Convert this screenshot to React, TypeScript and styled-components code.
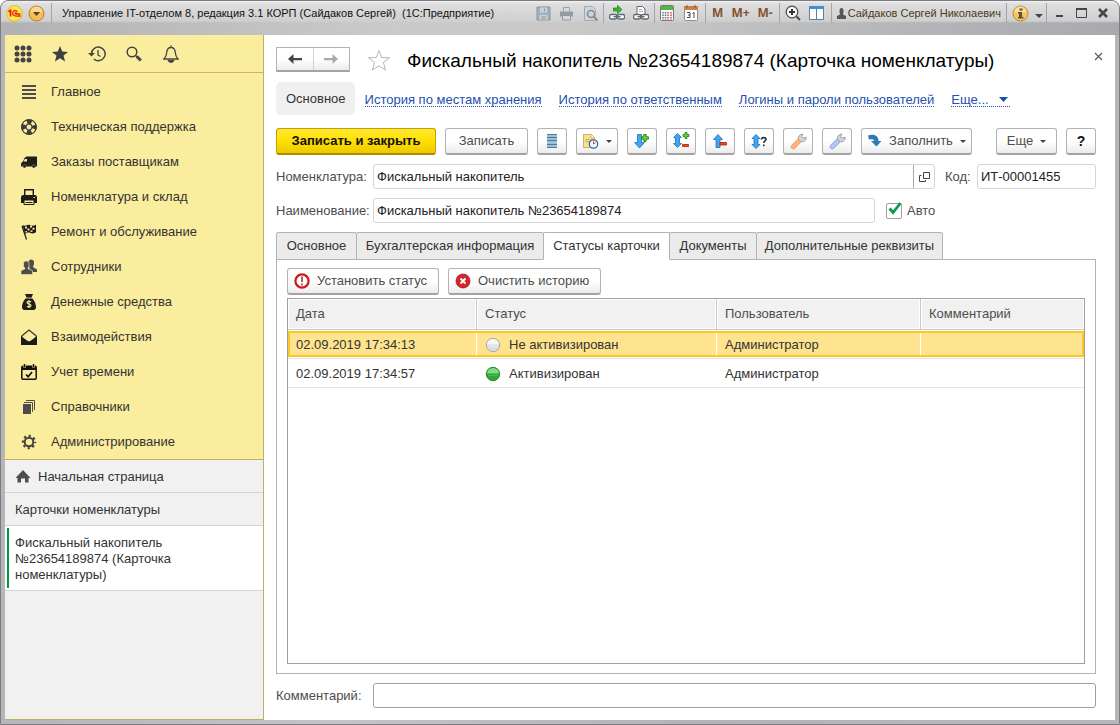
import React from 'react';
import styled, { createGlobalStyle, css } from 'styled-components';

const GlobalStyle = createGlobalStyle`
  *, *::before, *::after { box-sizing: border-box; }
  body { margin: 0; background: #fff; color: #333; font: 13px/16px "Liberation Sans", Arial, sans-serif; }
  button, input { font: inherit; color: inherit; margin: 0; }
  svg { display: block; flex: none; }
`;

/* ---------- window frame ---------- */
const Window = styled.div`
  display: flex;
  flex-direction: column;
  min-height: 100vh;
  padding: 0 4px 4px;
  border: 1px solid #7d7d7f;
  border-radius: 8px 8px 0 0;
  background: linear-gradient(90deg, #b6b6b8, #c4c4c6 30%, #b4b5b8 60%, #b6b6b8);
`;
const TitleBar = styled.header`
  display: flex;
  align-items: center;
  height: 34px;
  margin: 0 -4px;
  padding: 0 5px 10px 5px;
  border-radius: 7px 7px 0 0;
  color: #1c1c1c;
  font: 11px/16px "Liberation Sans", Arial, sans-serif;
  background: linear-gradient(#f0f0f0 0, #dedede 3px, #cfcfd0 20px, rgba(200, 200, 202, 0) 22px),
    linear-gradient(90deg, #b2b2b4, #cacacb 35%, #c8c8c9 55%, #b2b3b6 85%, #a9aaae);
`;
const BarButton = styled.button<{ $w: number }>`
  display: flex;
  flex: none;
  align-items: center;
  justify-content: center;
  width: ${p => p.$w}px;
  height: 22px;
  padding: 0;
  border: 0;
  background: none;
`;
const MemoryButton = styled(BarButton)`
  color: #85522c;
  font: bold 12px/16px "Noto Sans", Tahoma, sans-serif;
`;
const BarLine = styled.span<{ $m?: number }>`
  flex: none;
  width: 1px;
  height: 20px;
  margin: 0 ${p => p.$m ?? 1}px;
  background: #a5a5a7;
`;
const AppTitle = styled.h1`
  flex: 1;
  margin: 0 0 0 9px;
  font: inherit;
  color: #111;
  white-space: nowrap;
`;
const UserName = styled.button`
  display: flex;
  align-items: center;
  gap: 2px;
  padding: 0 4px 0 3px;
  border: 0;
  background: none;
  color: #4a3a1c;
  white-space: nowrap;
`;
const Body = styled.div`
  display: flex;
  flex: 1;
  background: #fff;
`;

/* ---------- sidebar ---------- */
const Sidebar = styled.aside`
  display: flex;
  flex-direction: column;
  flex: none;
  width: 259px;
  border-right: 1px solid #bfb060;
  border-bottom: 1px solid #bfb060;
  background: #f1f1f1;
`;
const SideTools = styled.div`
  display: flex;
  align-items: center;
  gap: 13px;
  height: 38px;
  padding: 0 6px;
  border-bottom: 1px solid #c8b760;
  background: #fbed9e;
`;
const SideTool = styled.button`
  display: flex;
  align-items: center;
  justify-content: center;
  width: 24px;
  height: 24px;
  padding: 0;
  border: 0;
  background: none;
  color: #444;
`;
const Sections = styled.nav`
  padding-top: 1px;
  border-bottom: 1px solid #c0af58;
  background: #fbed9e;
`;
const Section = styled.a`
  display: flex;
  align-items: center;
  gap: 14px;
  height: 35px;
  padding-left: 16px;
  color: #333;
  text-decoration: none;
`;
const OpenPage = styled.a<{ $active?: boolean }>`
  display: flex;
  gap: 7px;
  padding: 9px 60px 7px 10px;
  border-bottom: 1px solid #d4d4d4;
  color: #333;
  text-decoration: none;
  ${p => p.$active && css`
    background: linear-gradient(#009646, #009646) 2px 2px / 2px calc(100% - 4px) no-repeat #fff;
  `}
`;

/* ---------- page ---------- */
const Page = styled.main`
  display: flex;
  flex-direction: column;
  flex: 1;
  min-width: 0;
  padding: 12px 19px 12px 12px;
`;
const Heading = styled.div`
  display: flex;
  align-items: center;
  height: 25px;
`;
const face = css`
  border: 1px solid #b3b3b3;
  border-bottom: 2px solid #a3a3a3;
  border-radius: 3px;
  background: linear-gradient(#fff 50%, #ececec);
`;
const History = styled.div`
  display: flex;
  width: 74px;
  height: 25px;
  ${face}
  border-radius: 1px;
`;
const HistoryButton = styled.button`
  display: flex;
  flex: 1;
  align-items: center;
  justify-content: center;
  padding: 0;
  border: 0;
  background: none;
  & + & { border-left: 1px solid #d0d0d0; }
`;
const StarButton = styled.button`
  margin: 0 16px 0 17px;
  padding: 0;
  border: 0;
  background: none;
`;
const PageTitle = styled.h2`
  flex: 1;
  margin: 0;
  padding-top: 2px;
  color: #000;
  font: 19px/24px "Liberation Sans", Arial, sans-serif;
  white-space: nowrap;
`;
const CloseButton = styled.button`
  display: flex;
  align-items: center;
  justify-content: center;
  width: 16px;
  height: 16px;
  margin: 0 -10px 6px 0;
  padding: 0;
  border: 0;
  background: none;
`;
const Links = styled.nav`
  display: flex;
  align-items: center;
  gap: 17px;
  margin: 10px 0 13px;
`;
const CurrentLink = styled.a`
  margin-right: -7px;
  padding: 9px 9px 8px 10px;
  border-radius: 5px;
  background: #f0f0f0;
  color: #333;
  text-decoration: none;
`;
const LinkTo = styled.a`
  display: flex;
  align-items: center;
  gap: 8px;
  height: 14px;
  margin-top: 3px;
  border-bottom: 1px dotted #2350b0;
  color: #2350b0;
  text-decoration: none;
  white-space: nowrap;
`;
const Toolbar = styled.div`
  display: flex;
  gap: 9px;
`;
const Button = styled.button<{ $w: number }>`
  display: flex;
  flex: none;
  align-items: center;
  justify-content: center;
  gap: 7px;
  width: ${p => p.$w}px;
  height: 27px;
  padding: 0;
  ${face}
  color: #4d4d4d;
  white-space: nowrap;
`;
const PrimaryButton = styled(Button)`
  border-color: #c0a200;
  border-bottom-color: #a88e00;
  background: linear-gradient(#ffe835, #ffe000 50%, #eec900);
  color: #111;
  font-weight: bold;
`;
const HelpButton = styled(Button)`
  color: #111;
  font-size: 14px;
  font-weight: bold;
`;
const StatusButton = styled(Button)`
  justify-content: flex-start;
  padding: 0 6px;
`;
const Spacer = styled.span`
  flex: 1;
`;

const Fields = styled.div`
  display: grid;
  gap: 9px;
  margin: 9px 0;
`;
const Field = styled.div`
  display: flex;
  align-items: center;
  height: 25px;
`;
const Label = styled.label<{ $w?: number }>`
  flex: none;
  width: ${p => p.$w ?? 97}px;
  color: #4d4d4d;
`;
const TextBox = styled.input<{ $w?: number; $strong?: boolean }>`
  ${p => (p.$w ? css`flex: none; width: ${p.$w}px;` : css`flex: 1; min-width: 0;`)}
  height: 25px;
  padding: 0 3px;
  border: 1px solid ${p => (p.$strong ? '#a0a0a0' : '#d5d5d5')};
  border-radius: 3px;
  background: #fff;
  color: #222;
`;
const Picker = styled.div`
  display: flex;
  flex: 1;
  height: 25px;
  margin-right: 10px;
  border: 1px solid #d5d5d5;
  border-radius: 3px;
  ${TextBox} { height: 23px; border: 0; }
`;
const PickerButton = styled.button`
  display: flex;
  align-items: center;
  justify-content: center;
  width: 21px;
  padding: 0;
  border: 0;
  border-left: 1px solid #a8a8a8;
  background: none;
`;
const Check = styled.label`
  display: flex;
  align-items: center;
  gap: 5px;
  width: 210px;
  margin-left: 11px;
  color: #4d4d4d;
`;
const Tick = styled.input`
  width: 16px;
  height: 16px;
  appearance: none;
  border: 1px solid #a0a0a0;
  border-radius: 2px;
  background: #fff;
`;
const TickWrap = styled.span`
  position: relative;
  display: flex;
  svg { position: absolute; left: 2px; top: -1px; pointer-events: none; }
`;

/* ---------- tabs and table ---------- */
const Tabs = styled.div`
  display: flex;
  height: 28px;
  margin-bottom: -1px;
`;
const Tab = styled.button<{ $w: number; $active?: boolean }>`
  z-index: ${p => (p.$active ? 1 : 0)};
  flex: none;
  width: ${p => p.$w}px;
  margin-right: -1px;
  padding: 0;
  border: 1px solid #b3b3b3;
  border-bottom-color: ${p => (p.$active ? '#fff' : '#b3b3b3')};
  border-radius: 2px 2px 0 0;
  background: ${p => (p.$active ? '#fff' : '#ebebeb')};
  color: #333;
  white-space: nowrap;
`;
const Panel = styled.section`
  display: flex;
  flex: 1;
  flex-direction: column;
  gap: 3px;
  padding: 8px 10px 9px;
  border: 1px solid #b3b3b3;
`;
const TableFrame = styled.div`
  flex: 1;
  border: 1px solid #a0a0a0;
`;
const Table = styled.table`
  width: 100%;
  border-collapse: separate;
  border-spacing: 0;
  table-layout: fixed;
`;
const Th = styled.th`
  height: 32px;
  padding: 0 8px 2px;
  background:
    linear-gradient(#cacaca, #cacaca) 0 30px / 100% 1px no-repeat,
    linear-gradient(#cacaca, #cacaca) 100% 0 / 1px 30px no-repeat,
    linear-gradient(#f1f1f1, #f1f1f1) 1px 1px / calc(100% - 3px) 28px no-repeat;
  color: #4d4d4d;
  font-weight: normal;
  text-align: left;
  &:last-child {
    background:
      linear-gradient(#cacaca, #cacaca) 0 30px / 100% 1px no-repeat,
      linear-gradient(#f1f1f1, #f1f1f1) 1px 1px / calc(100% - 2px) 28px no-repeat;
  }
`;
const Td = styled.td`
  height: 29px;
  padding: 1px 8px 0;
  border-bottom: 1px solid #e4e4e4;
`;
const Row = styled.tr<{ $selected?: boolean }>`
  ${p => p.$selected && css`
    ${Td} {
      height: 28px;
      padding: 0 8px;
      background:
        linear-gradient(#fcc729, #fcc729) 0 0 / 100% 2px no-repeat,
        linear-gradient(#fcc729, #fcc729) 0 24px / 100% 2px no-repeat,
        linear-gradient(#fff, #fff) 100% 2px / 1px 22px no-repeat,
        linear-gradient(#ffe490, #ffe490) 0 0 / 100% 26px no-repeat;
    }
    ${Td}:first-child {
      background:
        linear-gradient(#fcc729, #fcc729) 0 0 / 100% 2px no-repeat,
        linear-gradient(#fcc729, #fcc729) 0 24px / 100% 2px no-repeat,
        linear-gradient(#fcc729, #fcc729) 0 0 / 2px 26px no-repeat,
        linear-gradient(#fff, #fff) 100% 2px / 1px 22px no-repeat,
        linear-gradient(#ffe490, #ffe490) 0 0 / 100% 26px no-repeat;
    }
    ${Td}:last-child {
      background:
        linear-gradient(#fcc729, #fcc729) 0 0 / 100% 2px no-repeat,
        linear-gradient(#fcc729, #fcc729) 0 24px / 100% 2px no-repeat,
        linear-gradient(#fcc729, #fcc729) 100% 0 / 2px 26px no-repeat,
        linear-gradient(#ffe490, #ffe490) 0 0 / 100% 26px no-repeat;
    }
  `}
`;
const Status = styled.span`
  display: flex;
  align-items: center;
  gap: 8px;
`;
const Footer = styled(Field)`
  margin-top: 9px;
`;

/* ---------- icons ---------- */
type SvgProps = { w?: number; h?: number; children: React.ReactNode };
const Svg = ({ w = 16, h = w, children }: SvgProps) => (
  <svg width={w} height={h} viewBox={`0 0 ${w} ${h}`} fill="none" aria-hidden="true">{children}</svg>
);
const Caret = ({ color = '#444' }) => <Svg w={6} h={3}><path d="M0 0h6L3 3z" fill={color} /></Svg>;

const Logo = () => (
  <Svg w={17}>
    <circle cx="8.5" cy="8.5" r="7.8" fill="#fde94a" stroke="#e3b82c" />
    <path d="M2.500 6.700 4.500 5.300V11.500" stroke="#df1b1b" strokeWidth="1.700" />
    <path d="M11.300 6.700C10.500 5 6.700 5 6.700 8.300c0 3.300 3.300 2.700 8 2.700M10.700 8.300C9 7.200 8.500 9 10 9h4.500" stroke="#df1b1b" strokeWidth="1.300" />
  </Svg>
);
const MenuBall = () => (
  <Svg w={17}>
    <circle cx="8.500" cy="8.500" r="7.500" fill="#f6bd57" stroke="#b9792c" />
    <path d="M2.500 7.500a6 6 0 0 1 12 0" fill="#fbd892" />
    <path d="M5 7h7l-3.500 4z" fill="#594325" />
  </Svg>
);
const InfoBall = () => (
  <Svg w={17}>
    <circle cx="8.500" cy="8.500" r="7.500" fill="#f8c45c" stroke="#c08a35" />
    <path d="M2.500 7.500a6 6 0 0 1 12 0" fill="#fbdc9a" />
    <path d="M7.500 3.500h3v2h-3zM6 7h4v5h1.500v1.500H6V12h1V8.500H6z" fill="#5b5142" />
  </Svg>
);
const SaveIcon = () => (
  <Svg w={15}>
    <path d="M1 1h13v13H1z" fill="#a4b1bb" stroke="#8797a3" />
    <path d="M4 1.500h7v5H4zM3.500 9h8v5h-8z" fill="#ccd3d8" /><path d="M8.500 2.500v3M5 11h5M5 13h5" stroke="#8797a3" />
  </Svg>
);
const GreyPrinter = () => (
  <Svg w={15}>
    <path d="M4.500 5V1.500h6V5" fill="#d8dcdf" stroke="#96a2ab" />
    <path d="M1 5.500h13v5H1z" fill="#919da6" /><path d="M3.500 9.500h8v4.500h-8z" fill="#d5dade" stroke="#8c99a3" />
  </Svg>
);
const PreviewIcon = () => (
  <Svg w={15}>
    <path d="M1.500.5h8l3 3v11h-11z" fill="#cfd5da" stroke="#a0abb3" />
    <circle cx="8" cy="8" r="3.500" stroke="#7d8c98" strokeWidth="1.500" /><path d="m10.500 10.500 4 4" stroke="#7d8c98" strokeWidth="2" />
  </Svg>
);
const ChainLinks = () => (
  <>
    <rect x=".7" y="9.500" width="7" height="4.500" rx="1.500" fill="#fff" stroke="#5e6a76" strokeWidth="1.300" />
    <rect x="8.500" y="9.500" width="7" height="4.500" rx="1.500" fill="#fff" stroke="#5e6a76" strokeWidth="1.300" />
    <path d="M4.500 11.700h7" stroke="#5e6a76" strokeWidth="1.400" />
  </>
);
const LinkGo = () => (
  <Svg><ChainLinks /><path d="M4.500 3h4V.5l4.500 4-4.500 4V6h-4z" fill="#35b925" stroke="#197c12" strokeWidth=".7" /></Svg>
);
const LinkPaper = () => (
  <Svg><path d="M4 9V1.500h5.500L12 4v5" fill="#fff" stroke="#5e6a76" /><path d="M6 4.500h3M6 6.500h4" stroke="#aab" /><ChainLinks /></Svg>
);
const CalcIcon = () => (
  <Svg w={14} h={16}>
    <rect x=".5" y=".5" width="13" height="15" rx="1" fill="#f7f7f7" stroke="#777" />
    <path d="M1 1h12v4H1z" fill="#4fb64c" />
    <path d="M3 7v8M5.500 7v8M8 7v8" stroke="#777" strokeWidth="1.500" strokeDasharray="1.500 1" /><path d="M11 7v8" stroke="#e04b3b" strokeWidth="1.500" strokeDasharray="1.500 1" />
  </Svg>
);
const DateIcon = () => (
  <Svg w={14} h={16}>
    <rect x=".5" y="1.500" width="13" height="14" rx="1" fill="#fff" stroke="#8d8d8d" />
    <path d="M0 1h14v4H0z" fill="#c9814b" /><path d="M3 0v3M11 0v3" stroke="#8b5127" />
    <path d="M3 7.500h3v5H3M4 10h2M8.500 8.500l1.500-1v5.500" stroke="#444" />
  </Svg>
);
const ZoomIcon = () => (
  <Svg>
    <circle cx="7" cy="7" r="5.800" fill="#f7f7f7" stroke="#4a4a4a" strokeWidth="1.200" />
    <path d="M7 4v6M4 7h6" stroke="#333" strokeWidth="2" /><path d="m11.500 11.500 3.500 3.500" stroke="#4a4a4a" strokeWidth="2" />
  </Svg>
);
const PanesIcon = () => (
  <Svg w={15} h={14}>
    <path d="M.5.500h14v13H.5z" fill="#fff" stroke="#5c7f9d" /><path d="M0 0h15v3H0z" fill="#3f8fd5" /><path d="M7.500 3v11" stroke="#5c7f9d" />
  </Svg>
);
const UserIcon = () => (
  <Svg w={9} h={11}><path d="M2.500 3a2 3 0 0 1 4 0c0 2-.5 2.500-.5 3.500l3 1.500v3H0V8l3-1.500C3 5.500 2.500 5 2.500 3z" fill="#555" /></Svg>
);

const GridIcon = () => (
  <Svg w={18}>{[3, 9, 15].map(y => [3, 9, 15].map(x => <circle key={`${x}-${y}`} cx={x} cy={y} r="2.500" fill="#444" />))}</Svg>
);
const StarSolid = () => (
  <Svg><path d="m8 0 2.200 5.600 5.800.3-4.500 3.700L13.100 15.500 8 12.200 2.900 15.500 4.500 9.600 0 5.900l5.800-.3z" fill="#3f3f3f" /></Svg>
);
const ClockIcon = () => (
  <Svg w={18} h={16}>
    <path d="M3.500 8A6.800 6.800 0 1 1 5.800 13" stroke="#444" strokeWidth="1.500" />
    <path d="M0 7h7l-3.500 3.500z" fill="#444" /><path d="M10 4v5l2.500 1.500" stroke="#444" strokeWidth="1.300" />
  </Svg>
);
const SearchIcon = () => (
  <Svg><circle cx="6" cy="6" r="4.800" stroke="#444" strokeWidth="1.500" /><path d="m9.500 9.500 2 1.500" stroke="#444" strokeWidth="1.500" /><path d="m10.800 10.500 4 4" stroke="#444" strokeWidth="3" /></Svg>
);
const BellIcon = () => (
  <Svg w={16} h={18}>
    <path d="M1 14c2-2 2.500-3 2.700-6.500C4 4 6 2.500 8 2.500S12 4 12.300 7.500C12.500 11 13 12 15 14z" stroke="#444" strokeWidth="1.300" />
    <path d="M8 0v3M5 15.500h6l-1.500 1.700h-3z" fill="#444" stroke="#444" />
  </Svg>
);

const MainIcon = () => <Svg><path d="M1 2h14M1 6h14M1 10h14M1 14h14" stroke="#4d4d4d" strokeWidth="2" /></Svg>;
const BuoyIcon = () => (
  <Svg>
    <circle cx="8" cy="8" r="5.300" stroke="#3c3c3c" strokeWidth="5" /><circle cx="8" cy="8" r="5.300" stroke="#fbed9e" strokeWidth="3.200" strokeDasharray="3.600 4.725" strokeDashoffset="-2" />
    <circle cx="8" cy="8" r="7.400" stroke="#3a3a3a" /><circle cx="8" cy="8" r="2.900" fill="#fbed9e" stroke="#444" />
  </Svg>
);
const TruckIcon = () => (
  <Svg>
    <path d="M5.500 2.500H16v10H1c-1 0-1-.5-1-1.500 0-2.500 1-3 2-3.500L3.500 4z" fill="#1e1e1e" /><path d="M3.800 5H6v2.500H2.600z" fill="#fbed9e" />
    <circle cx="3.500" cy="12.300" r="1.700" fill="#1e1e1e" stroke="#fbed9e" strokeWidth=".3" /><circle cx="12.800" cy="12.300" r="1.700" fill="#1e1e1e" stroke="#fbed9e" strokeWidth=".3" />
  </Svg>
);
const PrinterIcon = () => (
  <Svg>
    <path d="M3.700 7V.700h8.600V7" stroke="#1b1b1b" strokeWidth="1.400" /><path d="M1.500 6h13L16 7.500V14H0V7.500z" fill="#1b1b1b" />
    <path d="M3 11h10v4.500H3z" fill="#fbed9e" stroke="#1b1b1b" /><path d="M4.500 13.500h7" stroke="#1b1b1b" /><path d="M12.500 8.500h1.500" stroke="#fbed9e" />
  </Svg>
);
const FlagIcon = () => (
  <Svg>
    <path d="M1 2l4.500 13.500" stroke="#1b1b1b" strokeWidth="1.200" /><path d="M1.500 1c3 2 5-1 7.500 0s4 1 6-.5V8c-2 2-4 1.500-6 .8s-3.500 0-5 1.200z" fill="#1b1b1b" />
    <path d="M4 2.500h2V4.500H4zM9 1.500h2V3.500H9zM6.500 4.500H8.500V6.500H6.500zM11.500 3.800H13.500v2h-2zM9.500 6.500h2v1.500h-2zM4.500 7h1.500v1.500h-1.500z" fill="#fbed9e" />
  </Svg>
);
const PeopleIcon = () => (
  <Svg>
    <path d="M7.500 3C7.500-.5 13-.5 13 3v2c0 1.200-1 1.700-1 3l4 2.500V13H9z" fill="#4d4d4d" />
    <path d="M2.500 4.500c0-3.500 5.500-3.500 5.500 0V7c0 1.200-1 1.500-1 2.700l4.500 2V15.500H0V11.700l4-2C4 8.500 2.500 8.200 2.500 7z" fill="#4d4d4d" stroke="#fbed9e" strokeWidth=".6" />
  </Svg>
);
const MoneyIcon = () => (
  <Svg>
    <path d="M4 0h8l-1.500 3.500c2 1.500 4.500 6 4.500 9.500 0 2-1 3-2.500 3h-9C2 16 1 15 1 13c0-3.500 2.500-8 4.500-9.500z" fill="#1e1e1e" />
    <path d="M4.500 4h7" stroke="#fbed9e" strokeWidth=".8" /><path d="M10 8c-1-1-4-1-4 .7s4 1 4 2.800-3 1.800-4 .7M8 6v8" stroke="#fbed9e" strokeWidth="1.100" />
  </Svg>
);
const MailIcon = () => (
  <Svg><path d="M.7 7 8 1l7.300 6M.7 7v8M15.300 7v8" stroke="#333" strokeWidth="1.200" /><path d="M0 7l6 4.500L0 16zM16 7l-6 4.500 6 4.500zM0 16l6-4.500 2 1 2-1 6 4.500z" fill="#1b1b1b" /></Svg>
);
const PlanIcon = () => (
  <Svg>
    <rect x=".8" y="2.300" width="14.400" height="12.900" rx="1.200" stroke="#111" strokeWidth="1.500" /><path d="M1 2h14v4H1z" fill="#111" />
    <path d="M3.500 0v3.500M12.500 0v3.500" stroke="#fbed9e" strokeWidth="2.500" /><path d="M3.500 0v3M12.500 0v3" stroke="#111" strokeWidth="1.500" /><path d="m5 10.500 2.200 2.200L11 8" stroke="#111" strokeWidth="1.700" />
  </Svg>
);
const BooksIcon = () => (
  <Svg><path d="M2 5h8v10H2z" fill="#4d4d4d" /><path d="M3 3.500h8.500V13M5 1.500h8.500V11" stroke="#4d4d4d" /></Svg>
);
const GearIcon = () => (
  <Svg><circle cx="8" cy="8" r="4.300" stroke="#444" strokeWidth="2" /><circle cx="8" cy="8" r="6" stroke="#444" strokeWidth="2.400" strokeDasharray="2.200 2.512" strokeDashoffset="1.100" /></Svg>
);
const HomeIcon = () => <Svg><path d="M8 1 15.500 9H13.500V13.500H10V9.500H6v4H2.500V9H.5z" fill="#4d4d4d" /></Svg>;

const Arrow = ({ color, flip }: { color: string; flip?: boolean }) => (
  <Svg w={14} h={12}><path d={flip ? 'M0 5h8.500V1L14 6l-5.500 5V7.300H0z' : 'M14 5H5.500V1L0 6l5.500 5V7.300H14z'} fill={color} /></Svg>
);
const StarOutline = () => (
  <Svg w={24} h={22}><path d="m12 1.500 2.700 7 7.800.300-6.100 4.700L18.600 21 12 16.800 5.400 21l2.200-7.500L1.500 8.800l7.800-.3z" stroke="#b0b7be" fill="#fff" /></Svg>
);
const Cross = ({ size, color, weight }: { size: number; color: string; weight: number }) => (
  <Svg w={size}><path d={`M1 1 ${size - 1} ${size - 1}M${size - 1} 1 1 ${size - 1}`} stroke={color} strokeWidth={weight} /></Svg>
);

const ListIcon = () => (
  <Svg w={10} h={14}><path d="M0 0h10v14H0z" fill="#9cc0d8" /><path d="M0 .500h10M0 3.500h10M0 6.500h10M0 10.500h10M0 13.500h10" stroke="#4f7c9c" /></Svg>
);
const DocClock = () => (
  <Svg w={17}>
    <path d="M1.500 1.500h8l3 3v10h-11z" fill="#f7e09a" stroke="#d6b055" /><path d="M9 1.500V5h3.500" fill="#fff" stroke="#d6b055" /><path d="M3.500 6.500h5M3.500 8.500h4" stroke="#d0aa55" />
    <circle cx="11.500" cy="11" r="4.200" fill="#f4faff" stroke="#35688f" strokeWidth="1.300" /><path d="M11.500 11V8.500M11.500 11l2-1.500" stroke="#d53c3c" />
  </Svg>
);
const blue = { fill: '#45a5ee', stroke: '#1f70b8', strokeWidth: 0.8 };
const green = { fill: '#69d534', stroke: '#1b8310', strokeWidth: 0.8 };
const red = { fill: '#ef4b23', stroke: '#b01d0b', strokeWidth: 0.8 };
const PLUS = 'M2 0h2v2h2v2H4v2H2V4H0V2h2z';
const DownPlus = () => (
  <Svg w={16}><path d="M3.500 1.500h4v8h3L5.500 15 .5 9.500h3z" {...blue} /><path d={PLUS} transform="translate(7.500 1.500) scale(1.150)" {...green} /></Svg>
);
const UpDown = ({ x = 1 }) => <path d="M4.500 1.500l4 4h-2v6h2l-4 4-4-4h2v-6h-2z" transform={`translate(${x} 0)`} {...blue} />;
const BothPlusMinus = () => (
  <Svg w={18}><UpDown /><path d={PLUS} transform="translate(11 .5)" {...green} /><path d="M10.500 12.500h6v2h-6z" {...red} /></Svg>
);
const UpMinus = () => (
  <Svg w={16}><path d="M6 1.500l4.500 5h-2.500v8H4v-8H1.500z" {...blue} /><path d="M8 9.500h6.500V12H8z" {...red} /></Svg>
);
const BothAsk = () => (
  <Svg><UpDown x={0.5} /><path d="M10.500 6.500c0-2.500 4.500-2.500 4.500 0 0 1.500-2.200 1.500-2.200 3.500M12.800 11.500v1.700" stroke="#2a333c" strokeWidth="1.600" /></Svg>
);
const Wrench = ({ color, edge }: { color: string; edge: string }) => (
  <Svg w={17}>
    <path d="M8.300 6.500C7.800 4 9.500 1.300 12.700 1l-1 2.700 1.500 1.500 3-1c.3 3.300-2.700 5.300-5.400 4.300L9.500 9.500 7.500 7.500z" fill="#d3d6d8" stroke="#858b90" strokeWidth=".8" />
    <path d="m3.300 13.700 5-5" stroke={edge} strokeWidth="5" strokeLinecap="round" /><path d="m3.300 13.700 5-5" stroke={color} strokeWidth="3.600" strokeLinecap="round" />
  </Svg>
);
const FillIcon = () => (
  <Svg w={15} h={14}><path d="M1 1.500C7-.5 11.500 1.500 11.500 7H14.500L9.500 12.500 4 7H7C7 5 5 4.800 2 5.500z" fill="#2e7caf" /></Svg>
);
const OpenIcon = () => <Svg w={11} h={10}><path d="M4.500.500h6v6h-6zM2.500 3.500h-2v6h6V8" stroke="#444" /></Svg>;
const TickMark = () => <Svg w={14} h={14}><path d="M1.500 6.500 5 10.500 12.500 1" stroke="#0b9a4a" strokeWidth="2.800" /></Svg>;
const AlertIcon = () => (
  <Svg><circle cx="8" cy="8" r="6.600" fill="#fff" stroke="#cb1c22" strokeWidth="2.300" /><path d="M8 3.500v5.500M8 10.500v2" stroke="#b5393c" strokeWidth="1.700" /></Svg>
);
const ClearIcon = () => (
  <Svg><circle cx="8" cy="8" r="7" fill="#d4242c" stroke="#aa171e" strokeWidth=".8" /><path d="m5.500 5.500 5 5M10.500 5.500l-5 5" stroke="#fff" strokeWidth="2" /></Svg>
);
const Ball = ({ on }: { on?: boolean }) => (
  <Svg w={16}>
    <circle cx="8" cy="8" r="6.700" fill={on ? '#32a63a' : '#dedede'} stroke={on ? '#24852c' : '#a9a9a9'} />
    <path d="M2 7.500a6 5.600 0 0 1 12 0z" fill={on ? '#86d888' : '#f7f7f7'} /><path d="M3 9.500h10" stroke={on ? '#49bd4e' : '#ededed'} />
  </Svg>
);

const sections: [string, React.FC][] = [
  ['Главное', MainIcon], ['Техническая поддержка', BuoyIcon], ['Заказы поставщикам', TruckIcon],
  ['Номенклатура и склад', PrinterIcon], ['Ремонт и обслуживание', FlagIcon], ['Сотрудники', PeopleIcon],
  ['Денежные средства', MoneyIcon], ['Взаимодействия', MailIcon], ['Учет времени', PlanIcon],
  ['Справочники', BooksIcon], ['Администрирование', GearIcon],
];
const sideTools: [string, React.FC][] = [
  ['Все разделы', GridIcon], ['Избранное', StarSolid], ['История', ClockIcon], ['Поиск', SearchIcon], ['Оповещения', BellIcon],
];
const tabs: [string, number][] = [
  ['Основное', 81], ['Бухгалтерская информация', 188], ['Статусы карточки', 127], ['Документы', 88], ['Дополнительные реквизиты', 187],
];
const rows = [
  { date: '02.09.2019 17:34:13', status: 'Не активизирован', user: 'Администратор', on: false },
  { date: '02.09.2019 17:34:57', status: 'Активизирован', user: 'Администратор', on: true },
];

export default function App() {
  return (
    <Window>
      <GlobalStyle />
      <TitleBar>
        <BarButton $w={17} aria-label="1С"><Logo /></BarButton>
        <BarButton $w={27} aria-label="Меню"><MenuBall /></BarButton>
        <BarLine />
        <AppTitle>Управление IT-отделом 8, редакция 3.1 КОРП (Сайдаков Сергей)&nbsp; (1С:Предприятие)</AppTitle>
        <BarButton $w={23} aria-label="Сохранить"><SaveIcon /></BarButton>
        <BarButton $w={24} aria-label="Печать"><GreyPrinter /></BarButton>
        <BarButton $w={23} aria-label="Просмотр"><PreviewIcon /></BarButton>
        <BarLine />
        <BarButton $w={24} aria-label="Перейти по ссылке"><LinkGo /></BarButton>
        <BarButton $w={24} aria-label="Получить ссылку"><LinkPaper /></BarButton>
        <BarLine />
        <BarButton $w={23} aria-label="Калькулятор"><CalcIcon /></BarButton>
        <BarButton $w={25} aria-label="Календарь"><DateIcon /></BarButton>
        <BarLine />
        <MemoryButton $w={22}>M</MemoryButton>
        <MemoryButton $w={24}>M+</MemoryButton>
        <MemoryButton $w={25}>M-</MemoryButton>
        <BarLine />
        <BarButton $w={24} aria-label="Масштаб"><ZoomIcon /></BarButton>
        <BarButton $w={24} aria-label="Панели"><PanesIcon /></BarButton>
        <BarLine $m={2} />
        <UserName><UserIcon />Сайдаков Сергей Николаевич</UserName>
        <BarLine />
        <BarButton $w={25} aria-label="Справка"><InfoBall /></BarButton>
        <BarButton $w={12} aria-label="Еще"><Svg w={8} h={12}><path d="M0 7h8l-4 4z" fill="#444" /></Svg></BarButton>
        <BarLine />
        <BarButton $w={22} aria-label="Свернуть"><Svg w={7} h={10}><path d="M0 8h7" stroke="#444" strokeWidth="2" /></Svg></BarButton>
        <BarButton $w={22} aria-label="Развернуть"><Svg w={11} h={10}><path d="M.5 1.500h10v8H.5z" stroke="#444" /><path d="M0 1h11" stroke="#444" strokeWidth="2" /></Svg></BarButton>
        <BarButton $w={22} aria-label="Закрыть"><Cross size={10} color="#444" weight={2.5} /></BarButton>
      </TitleBar>
      <Body>
        <Sidebar>
          <SideTools>
            {sideTools.map(([name, Icon]) => <SideTool key={name} aria-label={name}><Icon /></SideTool>)}
          </SideTools>
          <Sections>
            {sections.map(([name, Icon]) => <Section key={name} href="#"><Icon />{name}</Section>)}
          </Sections>
          <OpenPage href="#"><HomeIcon />Начальная страница</OpenPage>
          <OpenPage href="#">Карточки номенклатуры</OpenPage>
          <OpenPage href="#" $active>Фискальный накопитель №23654189874 (Карточка номенклатуры)</OpenPage>
        </Sidebar>
        <Page>
          <Heading>
            <History>
              <HistoryButton aria-label="Назад"><Arrow color="#444" /></HistoryButton>
              <HistoryButton aria-label="Вперед"><Arrow color="#aaa" flip /></HistoryButton>
            </History>
            <StarButton aria-label="В избранное"><StarOutline /></StarButton>
            <PageTitle>Фискальный накопитель №23654189874 (Карточка номенклатуры)</PageTitle>
            <CloseButton aria-label="Закрыть"><Cross size={9} color="#555" weight={1.1} /></CloseButton>
          </Heading>
          <Links>
            <CurrentLink href="#">Основное</CurrentLink>
            <LinkTo href="#">История по местам хранения</LinkTo>
            <LinkTo href="#">История по ответственным</LinkTo>
            <LinkTo href="#">Логины и пароли пользователей</LinkTo>
            <LinkTo href="#">Еще... <Svg w={13} h={5}><path d="M2 0h9L6.500 5z" fill="#1653b0" /></Svg></LinkTo>
          </Links>
          <Toolbar>
            <PrimaryButton $w={160}>Записать и закрыть</PrimaryButton>
            <Button $w={83}>Записать</Button>
            <Button $w={30} aria-label="Список"><ListIcon /></Button>
            <Button $w={42} aria-label="Создать на основании"><DocClock /><Caret /></Button>
            <Button $w={30} aria-label="Добавить вниз"><DownPlus /></Button>
            <Button $w={30} aria-label="Добавить или убрать"><BothPlusMinus /></Button>
            <Button $w={30} aria-label="Убрать"><UpMinus /></Button>
            <Button $w={30} aria-label="Состояние"><BothAsk /></Button>
            <Button $w={30} aria-label="Ремонт"><Wrench color="#ffb27c" edge="#f09a62" /></Button>
            <Button $w={30} aria-label="Обслуживание"><Wrench color="#b3c8f5" edge="#86a0d8" /></Button>
            <Button $w={111}><FillIcon />Заполнить<Caret /></Button>
            <Spacer />
            <Button $w={61}>Еще<Caret /></Button>
            <HelpButton $w={30}>?</HelpButton>
          </Toolbar>
          <Fields>
            <Field>
              <Label htmlFor="item">Номенклатура:</Label>
              <Picker>
                <TextBox id="item" defaultValue="Фискальный накопитель" />
                <PickerButton aria-label="Открыть"><OpenIcon /></PickerButton>
              </Picker>
              <Label htmlFor="code" $w={32}>Код:</Label>
              <TextBox id="code" $w={119} defaultValue="ИТ-00001455" />
            </Field>
            <Field>
              <Label htmlFor="name">Наименование:</Label>
              <TextBox id="name" defaultValue="Фискальный накопитель №23654189874" />
              <Check>
                <TickWrap><Tick type="checkbox" defaultChecked /><TickMark /></TickWrap>
                Авто
              </Check>
            </Field>
          </Fields>
          <Tabs role="tablist">
            {tabs.map(([name, w], i) => <Tab key={name} role="tab" aria-selected={i === 2} $w={w} $active={i === 2}>{name}</Tab>)}
          </Tabs>
          <Panel>
            <Toolbar>
              <StatusButton $w={152}><AlertIcon />Установить статус</StatusButton>
              <StatusButton $w={153}><ClearIcon />Очистить историю</StatusButton>
            </Toolbar>
            <TableFrame>
              <Table>
                <colgroup><col width="189" /><col width="240" /><col width="204" /><col /></colgroup>
                <thead>
                  <tr><Th>Дата</Th><Th>Статус</Th><Th>Пользователь</Th><Th>Комментарий</Th></tr>
                </thead>
                <tbody>
                  {rows.map(r => (
                    <Row key={r.date} $selected={!r.on}>
                      <Td>{r.date}</Td>
                      <Td><Status><Ball on={r.on} />{r.status}</Status></Td>
                      <Td>{r.user}</Td>
                      <Td />
                    </Row>
                  ))}
                </tbody>
              </Table>
            </TableFrame>
          </Panel>
          <Footer>
            <Label htmlFor="comment">Комментарий:</Label>
            <TextBox id="comment" $strong />
          </Footer>
        </Page>
      </Body>
    </Window>
  );
}
